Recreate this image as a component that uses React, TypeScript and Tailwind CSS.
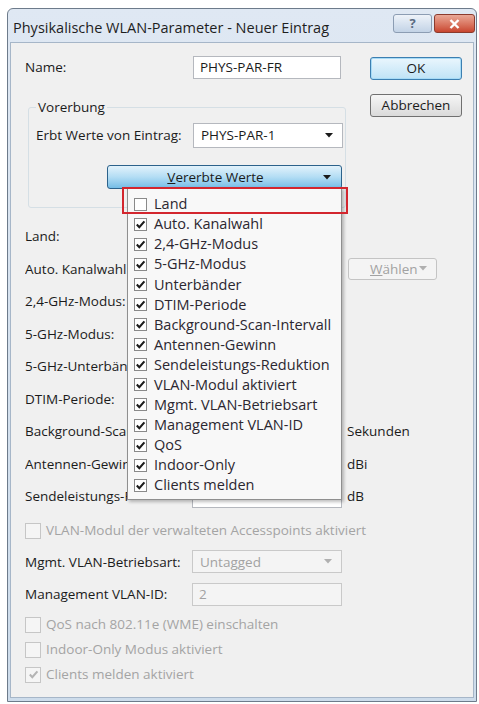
import React from 'react';

const menuItems = [
  { label: 'Land', checked: false },
  { label: 'Auto. Kanalwahl', checked: true },
  { label: '2,4-GHz-Modus', checked: true },
  { label: '5-GHz-Modus', checked: true },
  { label: 'Unterbänder', checked: true },
  { label: 'DTIM-Periode', checked: true },
  { label: 'Background-Scan-Intervall', checked: true },
  { label: 'Antennen-Gewinn', checked: true },
  { label: 'Sendeleistungs-Reduktion', checked: true },
  { label: 'VLAN-Modul aktiviert', checked: true },
  { label: 'Mgmt. VLAN-Betriebsart', checked: true },
  { label: 'Management VLAN-ID', checked: true },
  { label: 'QoS', checked: true },
  { label: 'Indoor-Only', checked: true },
  { label: 'Clients melden', checked: true },
];

function Arrow({ color = '#1a1a1a' }: { color?: string }) {
  return (
    <svg width="8" height="5" viewBox="0 0 8 5">
      <path d="M0 0 H8 L4 4.5 Z" fill={color} />
    </svg>
  );
}

function Check({ color = '#1c1c1c', size = 11 }: { color?: string; size?: number }) {
  return (
    <svg width={size} height={size} viewBox="0 0 11 11">
      <path d="M1.8 5.6 L4.3 8.2 L9.4 2.4" fill="none" stroke={color} strokeWidth="2.1" />
    </svg>
  );
}

function TextBox({ value, width = 'w-[150px]', disabled }: { value?: string; width?: string; disabled?: boolean }) {
  return (
    <div
      className={`${width} h-[23px] shrink-0 border ${
        disabled ? 'border-[#c9c9c9] bg-[#f4f4f4] text-[#a2a2a2]' : 'border-[#b5b8be] bg-white text-[#1b1b1b]'
      } flex items-center px-[6px]`}
    >
      {value}
    </div>
  );
}

function Combo({ value, disabled, h = 'h-[23px]' }: { value?: string; disabled?: boolean; h?: string }) {
  return (
    <div
      className={`w-[150px] ${h} shrink-0 border ${
        disabled ? 'border-[#c9c9c9] bg-[#f4f4f4] text-[#a2a2a2]' : 'border-[#b5b8be] bg-white text-[#1b1b1b]'
      } flex items-center pl-[7px] pr-[9px]`}
    >
      <span className="flex-1">{value}</span>
      <Arrow color={disabled ? '#b0b0b0' : '#1a1a1a'} />
    </div>
  );
}

// rows whose labels run under the open menu are cut at the menu's left edge
function Row({
  label,
  children,
  extra,
  covered,
}: {
  label: string;
  children?: React.ReactNode;
  extra?: React.ReactNode;
  covered?: boolean;
}) {
  return (
    <div className="flex h-[32.5px] items-center">
      <div className="w-[167px] shrink-0">
        <div className={`${covered ? 'max-w-[103px]' : ''} overflow-hidden whitespace-nowrap`}>{label}</div>
      </div>
      {children}
      {extra}
    </div>
  );
}

function DlgCheck({ label, checked }: { label: string; checked?: boolean }) {
  return (
    <div className="flex h-[20px] items-center">
      <span className="flex h-[16px] w-[16px] items-center justify-center border border-[#c6c6c6] bg-[#f5f5f5]">
        {checked && <Check color="#b4b4b4" size={11} />}
      </span>
      <span className="ml-[5px] text-[#a4a4a4]">{label}</span>
    </div>
  );
}

export default function App() {
  return (
    <div className="min-h-[704px] w-[479px] bg-white pl-[7px] pt-[8px] font-['Open_Sans',sans-serif] text-[13.5px] text-[#1b1b1b]">
      <div className="flex h-[694px] w-[470px] flex-col rounded-t-[6px] border border-[#6d7b8b] bg-gradient-to-b from-[#dfe8f3] to-[#cddceb]">
        {/* Title bar */}
        <div className="flex h-[33px] shrink-0 items-start pl-[5px] pr-[1px]">
          <span className="mt-[8px] text-[14.5px] text-[#1e1e1e]">Physikalische WLAN-Parameter - Neuer Eintrag</span>
          <div className="ml-auto mt-[5px] flex gap-[2px]">
            <div className="flex h-[19px] w-[39px] items-center justify-center rounded-[3px] border border-[#8c9db3] bg-gradient-to-b from-[#eef3f9] to-[#c3d3e6] text-[13px] font-bold text-[#5a6b82]">
              ?
            </div>
            <div className="flex h-[19px] w-[41px] items-center justify-center rounded-[3px] border border-[#8b3b2e] bg-gradient-to-b from-[#e9a897] to-[#c8452f]">
              <svg width="11" height="10" viewBox="0 0 11 10">
                <path d="M1.5 1 L9.5 9 M9.5 1 L1.5 9" stroke="white" strokeWidth="2.4" />
              </svg>
            </div>
          </div>
        </div>

        {/* Client area */}
        <div className="mx-[2px] mb-[3px] flex-1 border border-[#a6b6c8] bg-[#f0f0f0] pl-[14px]">
          {/* Top: name, inheritance group, OK / Abbrechen */}
          <div className="flex pt-[13px]">
            <div className="w-[322px]">
              <div className="flex items-center">
                <div className="w-[168px]">Name:</div>
                <TextBox value="PHYS-PAR-FR" width="w-[148px]" />
              </div>

              <div className="relative ml-[3px] mt-[28px] h-[101px] w-[318px] rounded-[3px] border border-[#d5dfe5]">
                <span className="absolute left-[7px] top-[-11px] bg-[#f0f0f0] px-[2px]">Vorerbung</span>
                <div className="ml-[7px] mt-[15px] flex items-center">
                  <div className="w-[157px]">Erbt Werte von Eintrag:</div>
                  <Combo value="PHYS-PAR-1" h="h-[25px]" />
                </div>

                <div className="relative ml-[78px] mt-[17px] w-[235px]">
                  <div className="flex h-[24px] items-center rounded-[3px] border border-[#2c628b] bg-gradient-to-b from-[#e2f2fb] via-[#b3ddf4] to-[#74bde6] pr-[10px]">
                    <span className="flex-1 text-center">
                      <span className="underline">V</span>ererbte Werte
                    </span>
                    <Arrow />
                  </div>

                  {/* Dropdown menu */}
                  <div className="absolute left-[20px] top-[22px] z-10 w-[215px] border border-[#8f8f8f] bg-[#f8f8f8] pb-[4px] pt-[6px] shadow-[2px_2px_3px_rgba(0,0,0,0.25)]">
                    {menuItems.map((item) => (
                      <div key={item.label} className="flex h-[20.1px] items-center pl-[6px] text-[14.5px] text-[#2b2730]">
                        <span className="flex h-[13px] w-[13px] items-center justify-center border border-[#8a8a8a] bg-white">
                          {item.checked && <Check />}
                        </span>
                        <span className="ml-[7px] whitespace-nowrap">{item.label}</span>
                      </div>
                    ))}
                    <div className="absolute left-[-6px] top-[-1px] h-[27px] w-[226px] border-2 border-[#d3262e]" />
                  </div>
                </div>
              </div>
            </div>

            <div className="ml-[23px] flex flex-col">
              <div className="mt-[1px] flex h-[23px] w-[92px] items-center justify-center rounded-[3px] border border-[#3c7fb1] bg-gradient-to-b from-[#eaf6fd] to-[#bfe3f6] shadow-[inset_0_0_0_1px_#a7dbf6]">
                OK
              </div>
              <div className="mt-[14px] flex h-[23px] w-[92px] items-center justify-center rounded-[3px] border border-[#707070] bg-gradient-to-b from-[#f6f6f6] to-[#dadada]">
                Abbrechen
              </div>
            </div>
          </div>

          {/* Parameter rows */}
          <div className="mt-[12px]">
            <Row label="Land:" covered>
              <Combo />
            </Row>
            <Row
              label="Auto. Kanalwahl:"
              covered
              extra={
                <div className="ml-[6px] flex h-[22px] w-[89px] items-center rounded-[3px] border border-[#c4c4c4] bg-[#f4f4f4] pl-[21px] pr-[9px] text-[#a2a2a2]">
                  <span className="flex-1">
                    <span className="underline">W</span>ählen
                  </span>
                  <Arrow color="#b0b0b0" />
                </div>
              }
            >
              <Combo />
            </Row>
            <Row label="2,4-GHz-Modus:" covered>
              <Combo />
            </Row>
            <Row label="5-GHz-Modus:" covered>
              <Combo />
            </Row>
            <Row label="5-GHz-Unterbänder:" covered>
              <Combo />
            </Row>
            <Row label="DTIM-Periode:" covered>
              <TextBox />
            </Row>
            <Row label="Background-Scan-Intervall:" covered extra={<span className="ml-[5px]">Sekunden</span>}>
              <TextBox />
            </Row>
            <Row label="Antennen-Gewinn:" covered extra={<span className="ml-[5px]">dBi</span>}>
              <TextBox />
            </Row>
            <Row label="Sendeleistungs-Reduktion:" covered extra={<span className="ml-[5px]">dB</span>}>
              <TextBox />
            </Row>
          </div>

          {/* Managed AP options */}
          <div className="mt-[8px]">
            <DlgCheck label="VLAN-Modul der verwalteten Accesspoints aktiviert" />
          </div>
          <div className="mt-[5px]">
            <Row label="Mgmt. VLAN-Betriebsart:">
              <Combo value="Untagged" disabled />
            </Row>
            <Row label="Management VLAN-ID:">
              <TextBox value="2" disabled />
            </Row>
          </div>
          <div className="mt-[4px] flex flex-col gap-[5px]">
            <DlgCheck label="QoS nach 802.11e (WME) einschalten" />
            <DlgCheck label="Indoor-Only Modus aktiviert" />
            <DlgCheck label="Clients melden aktiviert" checked />
          </div>
        </div>
      </div>
    </div>
  );
}
